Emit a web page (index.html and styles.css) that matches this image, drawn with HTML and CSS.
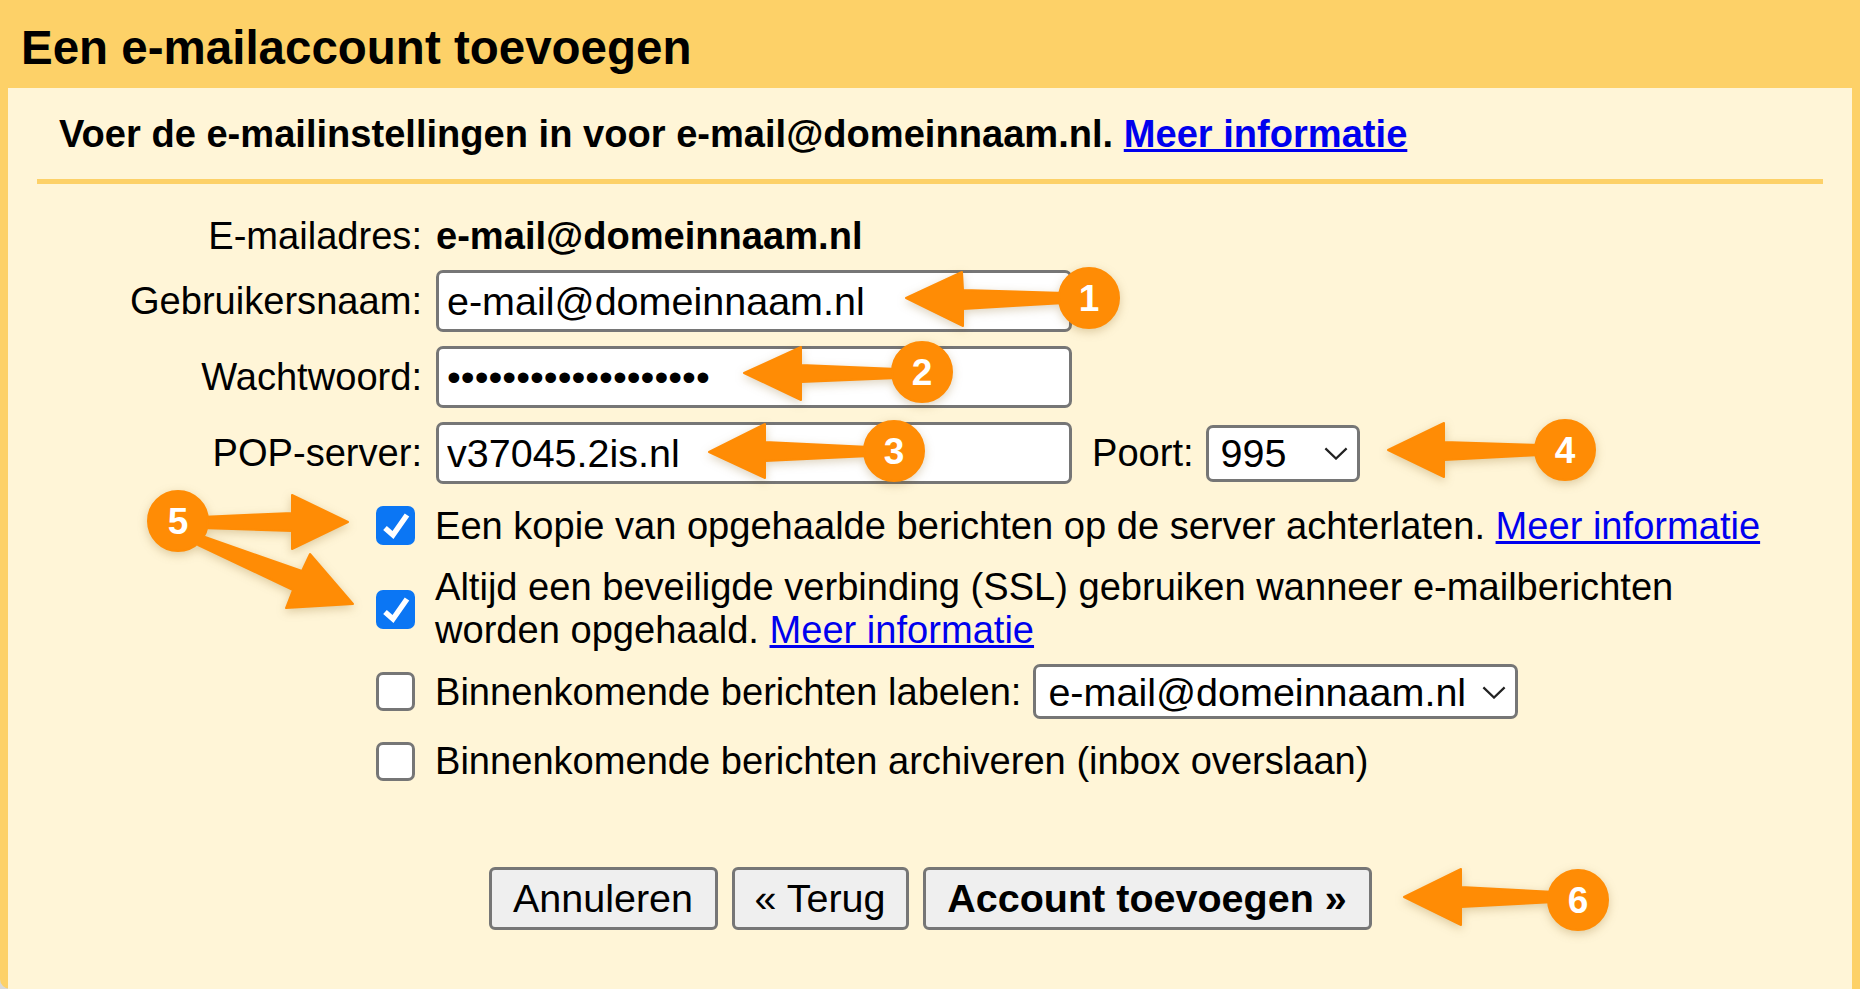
FILE: index.html
```html
<!DOCTYPE html>
<html lang="nl">
    <head>
        <meta charset="UTF-8" />
        <title>Een e-mailaccount toevoegen</title>
        <link rel="stylesheet" href="styles.css">
    </head>

    <body>
        <div class="dialog">
            <h1 class="dialog-title">Een e-mailaccount toevoegen</h1>

            <div class="panel">
                <p class="intro">
                    Voer de e-mailinstellingen in voor e-mail@domeinnaam.nl.
                    <a href="#">Meer informatie</a>
                </p>
                <hr class="rule" />

                <form class="settings">
                    <div class="row row-mail">
                        <span class="label">E-mailadres:</span>
                        <b>e-mail@domeinnaam.nl</b>
                    </div>
                    <div class="row row-field">
                        <label class="label" for="user">Gebruikersnaam:</label>
                        <input class="text" id="user" type="text" value="e-mail@domeinnaam.nl" />
                    </div>
                    <div class="row row-field">
                        <label class="label" for="pass">Wachtwoord:</label>
                        <input class="text" id="pass" type="password" value="wachtwoordwachtwoo1" />
                    </div>
                    <div class="row row-field">
                        <label class="label" for="pop">POP-server:</label>
                        <input class="text" id="pop" type="text" value="v37045.2is.nl" />
                        <label class="port-label" for="port">Poort:</label>
                        <label class="select select-port">
                            <select id="port"><option>995</option></select>
                            <svg viewBox="0 0 26 14"><path d="M1.5 1.5 13 12.5 24.5 1.5" /></svg>
                        </label>
                    </div>

                    <div class="option option-keep">
                        <span class="check on"><svg viewBox="0 0 39 39"><path d="M9 22 17 29 31 9" /></svg></span>
                        <span>Een kopie van opgehaalde berichten op de server achterlaten. <a href="#">Meer informatie</a></span>
                    </div>
                    <div class="option option-ssl">
                        <span class="check on"><svg viewBox="0 0 39 39"><path d="M9 22 17 29 31 9" /></svg></span>
                        <span>Altijd een beveiligde verbinding (SSL) gebruiken wanneer e-mailberichten<br />worden opgehaald. <a href="#">Meer informatie</a></span>
                    </div>
                    <div class="option option-label">
                        <span class="check"></span>
                        <span class="option-text">Binnenkomende berichten labelen:</span>
                        <label class="select select-label">
                            <select><option>e-mail@domeinnaam.nl</option></select>
                            <svg viewBox="0 0 26 14"><path d="M1.5 1.5 13 12.5 24.5 1.5" /></svg>
                        </label>
                    </div>
                    <div class="option option-archive">
                        <span class="check"></span>
                        <span>Binnenkomende berichten archiveren (inbox overslaan)</span>
                    </div>

                    <div class="buttons">
                        <button type="button" class="btn btn-cancel">Annuleren</button>
                        <button type="button" class="btn btn-back">« Terug</button>
                        <button type="button" class="btn btn-add">Account toevoegen »</button>
                    </div>
                </form>
            </div>
        </div>

        <!-- genummerde pijlen over het formulier -->
        <svg class="notes" viewBox="0 0 1860 989">
            <g class="arrow">
                <polygon points="906,298 962,272 963,290 1065,293 1065,303 963,309 963,326" />
                <circle cx="1089" cy="298" r="30" />
                <polygon points="744,373 801,347 801,365 898,369 898,378 801,382 801,400" />
                <circle cx="922" cy="372" r="30" />
                <polygon points="709,452 765,424 765,442 870,447 870,456 765,461 765,478" />
                <circle cx="894" cy="451" r="30" />
                <polygon points="1388,450 1444,423 1444,442 1540,445 1540,455 1444,460 1444,477" />
                <circle cx="1565" cy="450" r="30" />
                <polygon points="348,522 292,495 292,513 200,517 200,528 292,531 292,549" />
                <polygon points="353,604 310,554 302,571 205,537 198,545 293,590 286,608" />
                <circle cx="178" cy="521" r="30" />
                <polygon points="1404,897 1461,869 1461,887 1555,892 1555,902 1461,907 1461,925" />
                <circle cx="1578" cy="900" r="30" />
            </g>
            <text class="num" x="1089" y="311">1</text>
            <text class="num" x="922" y="385">2</text>
            <text class="num" x="894" y="464">3</text>
            <text class="num" x="1565" y="463">4</text>
            <text class="num" x="178" y="534">5</text>
            <text class="num" x="1578" y="913">6</text>
        </svg>
    </body>
</html>
```

FILE: styles.css
```css
html,
body {
    margin: 0;
    height: 100%;
    background-color: #d9d9d9;
}

body {
    position: relative;
    overflow: hidden;
    font-family: "Liberation Sans", Arial, sans-serif;
    font-size: 38.1px;
    line-height: 43px;
    color: #000;
}

a {
    color: #0000ee;
    text-decoration: underline;
}

.dialog {
    height: 989px;
    display: flex;
    flex-direction: column;
    background-color: #fdd168;
    border-bottom-left-radius: 10px;
}

.dialog-title {
    height: 88px;
    margin: 0;
    padding-left: 21px;
    font-size: 47.5px;
    line-height: 95px;
    font-weight: bold;
    box-sizing: border-box;
}

.panel {
    flex: 1;
    margin: 0 8px;
    padding: 0 29px;
    background-color: #fff5d7;
}

.intro {
    height: 91px;
    margin: 0;
    padding: 25px 0 0 22px;
    box-sizing: border-box;
    font-weight: bold;
}

.rule {
    height: 5px;
    margin: 0;
    border: none;
    background-color: #fdd168;
}

.row {
    display: flex;
    align-items: center;
}

.label {
    width: 385px;
    margin-right: 14px;
    text-align: right;
}

.row-mail {
    height: 43px;
    margin-top: 31px;
    margin-bottom: 12px;
}

.row-field {
    height: 62px;
    margin-bottom: 14px;
}

.text {
    width: 636px;
    height: 62px;
    padding: 0 8px;
    box-sizing: border-box;
    border: 3px solid #767676;
    border-radius: 7px;
    background-color: #fff;
    font-family: inherit;
    font-size: 39.5px;
    color: #000;
}

.port-label {
    margin: 0 12px 0 20px;
}

.select {
    position: relative;
    display: block;
}

.select select {
    display: block;
    width: 100%;
    height: 100%;
    padding: 0 0 0 12px;
    box-sizing: border-box;
    appearance: none;
    border: 3px solid #767676;
    border-radius: 7px;
    background-color: #fff;
    font-family: inherit;
    font-size: 39.5px;
    color: #000;
}

.select svg {
    position: absolute;
    top: 50%;
    right: 12px;
    width: 24px;
    height: 13px;
    margin-top: -6px;
    fill: none;
    stroke: #222;
    stroke-width: 2.4;
}

.select-port {
    width: 154px;
    height: 57px;
}

.select-label {
    width: 485px;
    height: 55px;
    margin-left: 12px;
}

.option {
    display: flex;
    align-items: center;
    margin-left: 339px;
}

.option-keep {
    margin-top: 21px;
}

.option-keep .check {
    margin-bottom: 2px;
}

.option-ssl {
    margin-top: 18px;
}

.option-label {
    height: 55px;
    margin-top: 12px;
}

.option-text {
    padding-top: 2px;
}

.option-archive {
    margin-top: 21px;
}

.check {
    flex: none;
    width: 39px;
    height: 39px;
    margin-right: 20px;
    box-sizing: border-box;
    border: 3px solid #767676;
    border-radius: 7px;
    background-color: #fff;
}

.check.on {
    border: none;
    background-color: #0b76f4;
}

.check svg {
    display: block;
    fill: none;
    stroke: #fff;
    stroke-width: 5.5;
}

.buttons {
    display: flex;
    justify-content: center;
    gap: 14px;
    margin-top: 84px;
}

.btn {
    height: 63px;
    padding: 0;
    box-sizing: border-box;
    border: 3px solid #767676;
    border-radius: 6px;
    background-color: #efefef;
    font-family: inherit;
    font-size: 39.5px;
    color: #000;
}

.btn-cancel {
    width: 229px;
}

.btn-back {
    width: 177px;
}

.btn-add {
    width: 449px;
    font-weight: bold;
}

.notes {
    position: absolute;
    top: 0;
    left: 0;
    width: 1860px;
    height: 989px;
    pointer-events: none;
}

.arrow {
    fill: #ff8c05;
    stroke: #ff8c05;
    stroke-width: 2;
    stroke-linejoin: round;
    filter: drop-shadow(0 3px 5px rgba(120, 80, 0, 0.25));
}

.num {
    fill: #fff;
    font-size: 37px;
    font-weight: bold;
    text-anchor: middle;
}
```
